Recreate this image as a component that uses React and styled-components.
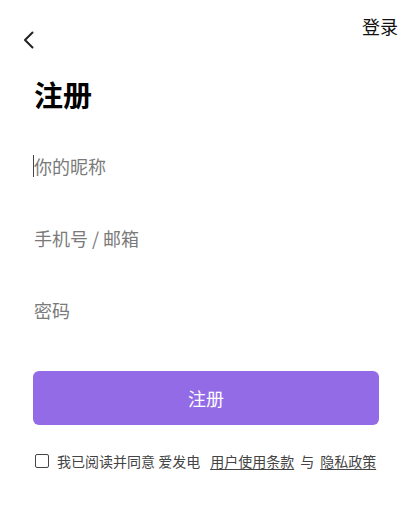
import React from "react";
import styled, { createGlobalStyle } from "styled-components";

const Global = createGlobalStyle`
  html, body { margin: 0; padding: 0; background: #fff; }
  body { font-family: "Noto Sans CJK SC", "Noto Sans", sans-serif; color: #111; }
  * { box-sizing: border-box; }
`;

const Page = styled.div`
  width: 408px;
  min-height: 527px;
  background: #fff;
`;

const TopBar = styled.header`
  height: 50px;
  display: flex;
  justify-content: space-between;
  align-items: flex-start;
  padding: 14px 10px 0 22px;
`;

const BackButton = styled.button`
  border: none;
  background: none;
  padding: 0;
  margin-top: 17px;
  width: 12px;
  height: 18px;
  display: flex;
  cursor: pointer;
`;

const LoginLink = styled.a`
  font-size: 18px;
  line-height: 24px;
  color: #111;
  text-decoration: none;
`;

const Title = styled.h1`
  margin: 24px 0 0;
  padding-left: 34px;
  font-size: 29px;
  line-height: 40px;
  font-weight: 700;
  color: #000;
`;

const Form = styled.form`
  margin-top: 16px;
  padding: 0 29px 0 33px;
  display: flex;
  flex-direction: column;
`;

const Field = styled.div`
  position: relative;
  height: 72px;
  display: flex;
  align-items: center;
  ${(p) =>
    p.$focused &&
    `
    &::before {
      content: "";
      position: absolute;
      left: 0;
      top: 25px;
      width: 1px;
      height: 22px;
      background: #444;
    }
  `}
`;

const Input = styled.input`
  width: 100%;
  border: none;
  outline: none;
  background: transparent;
  padding: 0 0 0 1px;
  font-family: inherit;
  font-size: 18px;
  line-height: 26px;
  color: #222;
  &::placeholder { color: #7a7a7a; }
`;

const SubmitButton = styled.button`
  margin-top: 25px;
  height: 54px;
  width: 100%;
  border: none;
  border-radius: 6px;
  background: #946be6;
  color: #fff;
  font-family: inherit;
  font-size: 18px;
  cursor: pointer;
`;

const AgreeRow = styled.label`
  margin-top: 26px;
  height: 20px;
  display: flex;
  align-items: center;
  font-size: 14px;
  color: #444;
  white-space: nowrap;
`;

const Box = styled.span`
  width: 14px;
  height: 14px;
  margin: 0 8px 0 2px;
  border: 1.5px solid #444;
  border-radius: 2px;
  flex: none;
`;

const Plain = styled.span`
  margin-right: ${(p) => p.$gap || 0}px;
`;

const Link = styled.a`
  color: #444;
  text-decoration: underline;
  text-underline-offset: 2px;
  margin-right: ${(p) => p.$gap || 0}px;
`;

export default function App() {
  return (
    <Page>
      <Global />
      <TopBar>
        <BackButton type="button" aria-label="返回">
          <svg width="12" height="18" viewBox="0 0 12 18">
            <path d="M10.5 1.5 L3 9 L10.5 16.5" fill="none" stroke="#222" strokeWidth="2" strokeLinecap="round" strokeLinejoin="round" />
          </svg>
        </BackButton>
        <LoginLink>登录</LoginLink>
      </TopBar>
      <Title>注册</Title>
      <Form onSubmit={(e) => e.preventDefault()}>
        <Field $focused>
          <Input placeholder="你的昵称" />
        </Field>
        <Field>
          <Input placeholder="手机号 / 邮箱" />
        </Field>
        <Field>
          <Input type="password" placeholder="密码" />
        </Field>
        <SubmitButton type="submit">注册</SubmitButton>
        <AgreeRow>
          <Box />
          <Plain $gap={10}>我已阅读并同意 爱发电</Plain>
          <Link $gap={6}>用户使用条款</Link>
          <Plain $gap={6}>与</Plain>
          <Link>隐私政策</Link>
        </AgreeRow>
      </Form>
    </Page>
  );
}
